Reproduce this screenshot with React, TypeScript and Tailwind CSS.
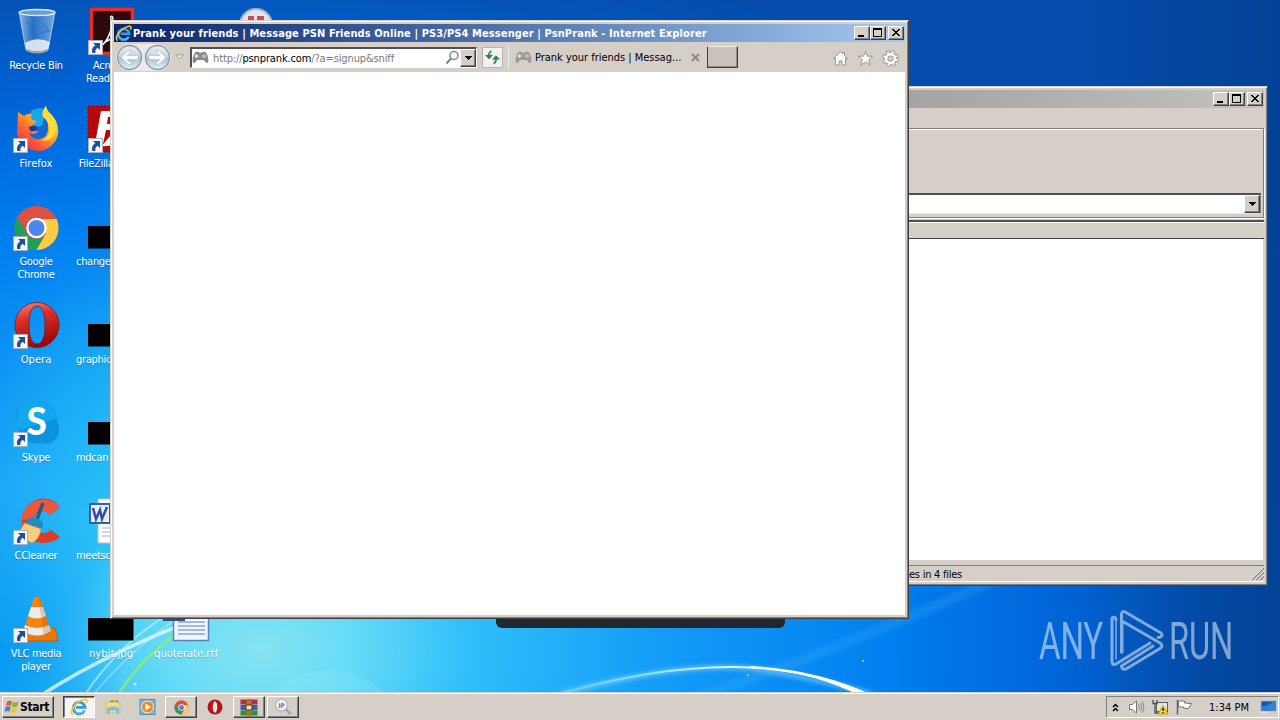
import React from 'react';
import clsx from 'clsx';

const raised =
  'border border-t-white border-l-white border-r-[#404040] border-b-[#404040] shadow-[inset_-1px_-1px_0_#808080]';
const frame =
  'border border-t-[#d4d0c8] border-l-[#d4d0c8] border-r-[#404040] border-b-[#404040] shadow-[inset_1px_1px_0_#fff,inset_-1px_-1px_0_#808080] p-[3px]';

function Wallpaper() {
  return (
    <svg className="absolute inset-0" width="1280" height="720" viewBox="0 0 1280 720">
      <defs>
        <radialGradient
          id="sky"
          gradientUnits="userSpaceOnUse"
          cx="0"
          cy="0"
          r="1000"
          gradientTransform="translate(260 650) scale(1.04 0.74)"
        >
          <stop offset="0" stopColor="#86e4f2" />
          <stop offset="0.09" stopColor="#66dbf6" />
          <stop offset="0.2" stopColor="#30bffa" />
          <stop offset="0.38" stopColor="#149df7" />
          <stop offset="0.6" stopColor="#0080f0" />
          <stop offset="0.76" stopColor="#0066da" />
          <stop offset="0.9" stopColor="#0454b8" />
          <stop offset="1" stopColor="#064cac" />
        </radialGradient>
        <radialGradient id="edge" gradientUnits="userSpaceOnUse" cx="0" cy="0" r="1" gradientTransform="translate(0 660) scale(130 180)">
          <stop offset="0" stopColor="#0092f0" stopOpacity="0.8" />
          <stop offset="1" stopColor="#0092f0" stopOpacity="0" />
        </radialGradient>
        <radialGradient id="glow" gradientUnits="userSpaceOnUse" cx="0" cy="0" r="1" gradientTransform="translate(130 440) scale(150 190)">
          <stop offset="0" stopColor="#28c8f4" stopOpacity="0.6" />
          <stop offset="1" stopColor="#28c8f4" stopOpacity="0" />
        </radialGradient>
        <linearGradient id="dusk" x1="0" x2="1">
          <stop offset="0" stopColor="#003a86" stopOpacity="0" />
          <stop offset="1" stopColor="#003a86" stopOpacity="0.6" />
        </linearGradient>
        <linearGradient id="arc" x1="0" x2="1">
          <stop offset="0" stopColor="#7fdcff" stopOpacity="0.5" />
          <stop offset="0.6" stopColor="#d8f4ff" />
          <stop offset="1" stopColor="#ffffff" />
        </linearGradient>
        <filter id="soft" x="-20%" y="-20%" width="140%" height="140%">
          <feGaussianBlur stdDeviation="2" />
        </filter>
      </defs>
      <rect width="1280" height="720" fill="url(#sky)" />
      <rect width="300" height="700" fill="url(#glow)" />
      <rect width="200" height="700" fill="url(#edge)" />
      <rect x="1080" width="200" height="720" fill="url(#dusk)" />
      <circle cx="328" cy="752" r="82" fill="#b8f4ff" opacity="0.13" />
      <path d="M40 696Q110 650 225 608" fill="none" stroke="#e8fbff" strokeWidth="3.5" opacity="0.75" />
      <path d="M84 696Q120 642 172 612" fill="none" stroke="#d0f6ff" strokeWidth="2" opacity="0.6" />
      <path d="M92 696Q130 650 186 612" fill="none" stroke="#d0f6ff" strokeWidth="1.5" opacity="0.5" />
      <path d="M117 696Q140 660 176 634" fill="none" stroke="#90f060" strokeWidth="2.5" opacity="0.85" />
      <path d="M690 700Q850 646 1040 560" fill="none" stroke="#5fc0ff" strokeWidth="10" opacity="0.18" filter="url(#soft)" />
      <path d="M560 694Q700 656 775 672Q830 682 872 694" fill="none" stroke="#a0e4ff" strokeWidth="5" opacity="0.5" filter="url(#soft)" />
      <path d="M562 693Q660 666 735 667Q790 668 835 682" fill="none" stroke="url(#arc)" strokeWidth="2" />
      <path d="M750 666Q820 670 874 696L860 696Q812 671 750 668Z" fill="#fff" />
      <circle cx="748" cy="675" r="1" fill="#8fdcff" />
      <circle cx="863" cy="661" r="1" fill="#8fdcff" />
      <circle cx="135" cy="684" r="1.5" fill="#b8f4ff" />
    </svg>
  );
}

function ShortcutArrow() {
  return (
    <g transform="translate(1 32)">
      <rect x="0.5" y="0.5" width="14" height="14" fill="#f4f6f8" stroke="#a8b0b8" />
      <path d="M5 3h7v7l-2.300-2.300C7.600 9 7 10.700 7.500 13H4.300C3.300 9.500 4.500 7 7.300 5.300Z" fill="#1c4f9c" />
    </g>
  );
}

function BinIcon() {
  return (
    <>
      <defs>
        <linearGradient id="bin" x1="0" x2="1">
          <stop offset="0" stopColor="#cfe4f6" stopOpacity="0.7" />
          <stop offset="0.4" stopColor="#4c88cc" stopOpacity="0.5" />
          <stop offset="1" stopColor="#c8e0f4" stopOpacity="0.6" />
        </linearGradient>
      </defs>
      <path d="M7 4 14 42Q25 47 36 42L43 4Z" fill="url(#bin)" stroke="#a4c4e4" strokeWidth="1" />
      <ellipse cx="25" cy="4.500" rx="18" ry="3" fill="#6c9cd4" stroke="#d8eaf8" strokeWidth="1.300" />
      <path d="M13 35Q25 28 38 34L36 41Q25 46 14 41Z" fill="#eef2f6" opacity="0.85" />
      <path d="M14 41Q25 46 36 41V43Q25 48 14 43Z" fill="#a8a090" />
      <path d="m14 14 8 6-5 8m14-13 6 8-9 2" fill="none" stroke="#2d6cb8" strokeWidth="2" opacity="0.5" />
    </>
  );
}

function AcrobatIcon() {
  return (
    <>
      <rect x="4.500" y="1.500" width="41" height="44" fill="#2c0a0c" stroke="#ee2a24" strokeWidth="3.500" />
      <path d="M14 38C20 34 27 20 24 11c-2-4 4-4 1 3-1 9 6 18 14 18 4 0 3-3-3-3-9 0-17 3-22 9Z" fill="none" stroke="#fff" strokeWidth="1.500" />
    </>
  );
}

function FirefoxIcon() {
  return (
    <>
      <defs>
        <linearGradient id="fox" x1="0.9" y1="0" x2="0.1" y2="1">
          <stop offset="0" stopColor="#fff44f" />
          <stop offset="0.4" stopColor="#ffb02a" />
          <stop offset="0.7" stopColor="#ff5a30" />
          <stop offset="1" stopColor="#e8226a" />
        </linearGradient>
      </defs>
      <circle cx="27" cy="18" r="16" fill="#1268d8" />
      <path d="M19 5Q27 0 34 4L30 20 18 22Z" fill="#16a8ee" />
      <path d="M6 6 12 10Q16 7 20 8 18 11 20 14L25 15 21 19 18 21Q20 26 27 25 23 30 17 27 20 34 28 33 37 31 36 20 36 11 30 9 31 3 34 0C34 6 40 8 44 15 50 29 43 40 32 44 18 48 8 38 5 28 3 19 7 13Z" fill="url(#fox)" />
      <path d="M34 0Q30 5 31 11 39 17 37 27 34 34 28 34 38 37 43 28 46 18 40 9 35 5 34 0Z" fill="#ffdc38" />
      <path d="M17 21Q23 18 25 21 25 26 18 25Z" fill="#203a90" />
    </>
  );
}

function FileZillaIcon() {
  return (
    <>
      <rect x="1" y="0" width="46" height="46" fill="#b8080c" stroke="#8a0408" strokeDasharray="2 2" />
      <path d="M14 5h24l-1 6H21l-1 7h12l-2 6H19l-3 14H8Z" fill="#fff" />
      <path d="m29 26-10 12 10-1v8h14" fill="none" stroke="#fff" strokeWidth="4" />
    </>
  );
}

function ChromeMark({ cx = 24.5, cy = 24, r = 22 }: { cx?: number; cy?: number; r?: number }) {
  return (
    <g transform={`translate(${cx} ${cy}) scale(${r / 22})`}>
      <circle r="22" fill="#dd5144" />
      <path d="M-19 -11A22 22 0 0 0 0 22L9.500 5.500A11 11 0 0 1 -9.500 5.500Z" fill="#1da05e" />
      <path d="M0 22A22 22 0 0 0 20 -9H0L9.500 5.500Z" fill="#ffcd45" />
      <path d="M-19 -11-9.500 5.500 0 -9H20A22 22 0 0 0 -19 -11Z" fill="#dd5144" />
      <circle r="10.300" fill="#fff" />
      <circle r="8" fill="#4c87f0" />
    </g>
  );
}

function OperaIcon() {
  return (
    <>
      <defs>
        <linearGradient id="opera" x1="0" y1="0" x2="0.3" y2="1">
          <stop offset="0" stopColor="#f49080" />
          <stop offset="0.4" stopColor="#dc3028" />
          <stop offset="1" stopColor="#9c0808" />
        </linearGradient>
      </defs>
      <path
        fillRule="evenodd"
        d="M25 0.500a22 22.500 0 1 0 .1 0ZM25 4C31 4 33 13 33 23S31 42 25 42 17 33 17 23 19 4 25 4Z"
        fill="url(#opera)"
        stroke="#8c1410"
        strokeWidth="0.800"
      />
    </>
  );
}

function SkypeIcon() {
  return (
    <>
      <path d="M14 2C20-2 24 2 29 2 39 4 45 11 45 21 48 27 48 34 44 39 39 45 32 44 28 43 15 45 5 36 6 24 2 16 5 5 14 2Z" fill="#0d92e0" />
      <path d="M14 2C20-2 24 2 29 2 39 4 45 11 45 18L8 30C3 20 4 6 14 2Z" fill="#10a8ee" />
      <text x="24.500" y="35" textAnchor="middle" fill="#fff" fontSize="37" fontWeight="900" fontFamily="Lato, sans-serif">S</text>
    </>
  );
}

function CCleanerIcon() {
  return (
    <>
      <path d="M48 9 38 17C32 9 21 14 21 24s10 15 18 8l9 7C38 48 22 46 14 38 6 26 10 10 20 4 30-2 42 0 48 9Z" fill="#dc3c28" />
      <path d="M48 9 38 17C32 9 21 14 21 20L10 22C9 12 18 3 28 2S44 4 48 9Z" fill="#ea5840" />
      <path d="m31 5-7 19" stroke="#1c5c90" strokeWidth="3.500" />
      <path d="M17 20Q24 18 31 25L30 31 13 26Z" fill="#2888b8" />
      <path d="m12 25 17 6c-1 7-5 12-9 14L2 36C7 34 10 31 12 25Z" fill="#f6cc80" stroke="#d89848" strokeWidth="0.700" />
    </>
  );
}

function VlcIcon() {
  return (
    <>
      <path d="M12 32h31l3 13H8Z" fill="#e87808" stroke="#c05c04" />
      <path d="M22 2Q25 -1 28 2L39 36Q25 45 11 36Z" fill="#f48410" />
      <path d="m19 11 12 0 3 9Q25 25 16 20Z" fill="#ececec" />
      <path d="M13 29Q25 35 37 29L39 35Q25 44 11 35Z" fill="#ececec" />
      <path d="M26 0 28 2 39 36Q36 39 32 40Z" fill="#b84c00" opacity="0.25" />
    </>
  );
}

function PictureFile() {
  return <rect x="1" y="22" width="45.500" height="22.500" fill="#000" />;
}

function WordFile() {
  return (
    <>
      <path d="M11 1h30v44H11Z" fill="#f8fafe" stroke="#b8c4d8" />
      <path d="M15 30h22M15 34h22M15 38h22" stroke="#a8b4cc" />
      <rect x="3" y="6" width="20" height="19" fill="#e8eefa" stroke="#3c5ca0" strokeWidth="2" />
      <path d="m6 10 3 11 4-9 2 9 5-12" fill="none" stroke="#2c50a8" strokeWidth="2.500" />
    </>
  );
}

function RtfFile() {
  return (
    <>
      <path d="M11.500 1h35v43.500h-35Z" fill="#f0f6fe" stroke="#6080b8" strokeWidth="1.500" />
      <path d="M16 26h27M16 30h27M16 34h27M16 38h27" stroke="#5878c0" />
      <rect x="2" y="4" width="20" height="20" fill="#e8eefa" stroke="#2c4c98" strokeWidth="2" />
    </>
  );
}

function SearchDisc() {
  return (
    <>
      <circle cx="19" cy="17" r="16" fill="#dce4ee" stroke="#a8b4c8" strokeWidth="2" />
      <path d="M11 10h6m3 0h7" stroke="#d84848" strokeWidth="4" />
    </>
  );
}

interface DesktopItem {
  label: string;
  icon: React.ReactNode;
  shortcut?: boolean;
  start?: boolean;
  wide?: boolean;
}

const desktopItems: (DesktopItem | null)[] = [
  { label: 'Recycle Bin', icon: <BinIcon /> },
  { label: 'Firefox', icon: <FirefoxIcon />, shortcut: true, wide: true },
  { label: 'Google Chrome', icon: <ChromeMark />, shortcut: true },
  { label: 'Opera', icon: <OperaIcon />, shortcut: true, wide: true },
  { label: 'Skype', icon: <SkypeIcon />, shortcut: true },
  { label: 'CCleaner', icon: <CCleanerIcon />, shortcut: true },
  { label: 'VLC media player', icon: <VlcIcon />, shortcut: true },
  { label: 'Acrobat Reader DC', icon: <AcrobatIcon />, shortcut: true },
  { label: 'FileZilla Client', icon: <FileZillaIcon />, shortcut: true },
  { label: 'change', icon: <PictureFile />, start: true },
  { label: 'graphic', icon: <PictureFile />, start: true },
  { label: 'mdcan', icon: <PictureFile />, start: true },
  { label: 'meetsc', icon: <WordFile />, start: true },
  { label: 'nybit.jpg', icon: <PictureFile />, wide: true },
  null,
  null,
  null,
  null,
  null,
  null,
  { label: 'quoterate.rtf', icon: <RtfFile />, wide: true },
  { label: '', icon: <SearchDisc /> },
];

function DesktopIcons() {
  return (
    <div className="relative grid w-max grid-flow-col auto-cols-[72px] grid-rows-[repeat(7,98px)] gap-x-[3px] pt-2">
      {desktopItems.map((item, i) =>
        item ? (
          <div key={i} className="flex flex-col items-center gap-[3px]">
            <svg width="48" height="48" viewBox="0 0 48 48" className="overflow-visible">
              {item.icon}
              {item.shortcut && <ShortcutArrow />}
            </svg>
            <span
              className={clsx(
                'w-[72px] text-white [text-shadow:0_1px_1px_rgba(0,30,80,0.25)]',
                item.start ? 'pl-[1px] text-left' : 'text-center',
                item.wide && 'tracking-[0.05px]',
              )}
            >
              {item.label}
            </span>
          </div>
        ) : (
          <div key={i} />
        ),
      )}
    </div>
  );
}

function IeMark({ size }: { size: number }) {
  return (
    <svg width={size} height={size} viewBox="0 0 18 18">
      <path d="M14.500 12.500A5.800 5.800 0 1 1 15 9.300H6" fill="none" stroke="#2f9be0" strokeWidth="2.800" />
      <path d="M14.500 12.500A5.800 5.800 0 0 1 4 11" fill="none" stroke="#7cd0f8" strokeWidth="1" />
      <path d="M3 16.500C-2 15 6 3 14 1.500c3-.5 3.500 1 2.300 3.500" fill="none" stroke="#f2c62c" strokeWidth="1.700" />
    </svg>
  );
}

function Gamepad() {
  return (
    <svg width="17" height="13" viewBox="0 0 17 13" className="shrink-0">
      <path d="M4 .8h2.500l1 1h2l1-1H13C15.500 2 16.800 8 16.200 11c-1 2-2.700 1-4.200-2H5C3.500 12 1.800 13 .8 11 .2 8 1.500 2 4 .8Z" fill="#8a8a8a" />
      <path d="M4.500 3v4M2.500 5h4" stroke="#e8e8e8" strokeWidth="1.300" />
      <path d="M12 3v4M10 5h4" stroke="#ddd" strokeWidth="1.300" strokeDasharray="1.300 1.400" />
    </svg>
  );
}

function CaptionButton({ kind }: { kind: 'min' | 'max' | 'close' }) {
  return (
    <span className={clsx('flex h-[14px] w-4 items-center justify-center bg-[#d4d0c8]', raised, kind === 'close' && 'ml-[2px]')}>
      <svg width="14" height="12" viewBox="0 0 14 12" shapeRendering="crispEdges">
        {kind === 'min' && <path d="M3 8h6v2H3Z" />}
        {kind === 'max' && <path fillRule="evenodd" d="M2 1h9v9H2ZM3 3h7v6H3Z" />}
        {kind === 'close' && <path d="M3 2h2v1h1v1h2V3h1V2h2v1h-1v1H9v1H8v1h1v1h1v1h1v1H9V8H8V7H6v1H5v1H3V8h1V7h1V6h1V5H5V4H4V3H3Z" />}
      </svg>
    </span>
  );
}

function CaptionButtons() {
  return (
    <div className="flex">
      <CaptionButton kind="min" />
      <CaptionButton kind="max" />
      <CaptionButton kind="close" />
    </div>
  );
}

function DropButton() {
  return (
    <span className={clsx('flex w-4 shrink-0 items-center justify-center bg-[#d4d0c8]', raised)}>
      <svg width="7" height="4" viewBox="0 0 7 4" shapeRendering="crispEdges">
        <path d="M0 0h7v1H6v1H5v1H4v1H3V3H2V2H1V1H0Z" />
      </svg>
    </span>
  );
}

function FilesWindow() {
  return (
    <div className={clsx('absolute top-[86px] left-[800px] flex h-[500px] w-[468px] flex-col bg-[#d6cfc8]', frame)}>
      <div className="flex h-[18px] items-center justify-end bg-linear-to-r from-[#9c9c9c] to-[#c2c1be] pr-[1px]">
        <CaptionButtons />
      </div>
      <div className="h-5" />
      <div className="flex h-[90px] flex-col justify-end border border-[#808080] pr-[2px] pb-[3px] shadow-[inset_0_1px_0_#fff,1px_1px_0_#fff]">
        <div className="flex h-[21px] border-t-2 border-r border-b border-t-[#505050] border-r-[#808080] border-b-[#e8e6e0] bg-white">
          <span className="flex-1" />
          <DropButton />
        </div>
      </div>
      <div className="mt-[2px] h-[2px] bg-[#505050]" />
      <div className="h-[17px] border-t border-b border-t-white border-b-[#404040] bg-[#d4d0c8]" />
      <div className="flex-1 border-r border-b border-[#d4d0c8] bg-white" />
      <div className="mt-1 flex h-[17px] items-center justify-between border-t border-b border-t-[#808080] border-b-white">
        <span className="pl-[105px] pt-[1px] tracking-[-0.25px] text-black">es in 4 files</span>
        <svg width="13" height="13" viewBox="0 0 13 13">
          <path d="M1 13 13 1M5 13l8-8M9 13l4-4" stroke="#808080" strokeWidth="1.500" />
          <path d="M0 13 13 0M4 13l9-9M8 13l5-5" stroke="#fff" strokeWidth="0.700" />
        </svg>
      </div>
    </div>
  );
}

function NavButton({ back }: { back?: boolean }) {
  return (
    <svg width="27" height="27" viewBox="0 0 27 27">
      <defs>
        <linearGradient id={back ? 'navBack' : 'navNext'} x1="0" y1="0" x2="0" y2="1">
          <stop offset="0" stopColor="#e8eef4" />
          <stop offset="0.48" stopColor="#c8d4e0" />
          <stop offset="0.52" stopColor="#acc0d0" />
          <stop offset="1" stopColor="#dcf6fc" />
        </linearGradient>
      </defs>
      <circle cx="13.500" cy="13.500" r="12" fill={back ? 'url(#navBack)' : 'url(#navNext)'} stroke="#8c9aa6" strokeWidth="1.300" />
      <path
        transform={back ? undefined : 'matrix(-1 0 0 1 27 0)'}
        d="M5 13.500 12.500 6.500h3.500l-5 5h11v4H11l5 5h-3.500Z"
        fill="#fff"
        stroke="#9cb0c0"
        strokeWidth="0.500"
      />
    </svg>
  );
}

function BrowserWindow() {
  return (
    <div className={clsx('absolute top-5 left-[110px] flex h-[599px] w-[799px] flex-col bg-[#d6cfc8]', frame)}>
      <div className="flex h-[18px] shrink-0 items-center bg-linear-to-r from-[#0a246a] to-[#a6caf0] pr-[1px] pl-[1px]">
        <IeMark size={17} />
        <span className="flex-1 pl-[1px] font-bold tracking-[0.1px] whitespace-nowrap text-white">
          Prank your friends | Message PSN Friends Online | PS3/PS4 Messenger | PsnPrank - Internet Explorer
        </span>
        <CaptionButtons />
      </div>
      <div className="flex h-[30px] shrink-0 items-center pl-[2px]">
        <div className="flex rounded-full bg-[#eceae6]">
          <NavButton back />
          <span className="ml-[1px] flex">
            <NavButton />
          </span>
        </div>
        <svg className="ml-1" width="9" height="6" viewBox="0 0 9 6">
          <path d="M.8.800h7.400L4.500 5Z" fill="#f4f2ee" stroke="#a09c94" />
        </svg>
        <div className="ml-[6px] flex h-[21px] w-[287px] items-center border-t-2 border-l-2 border-r border-b border-t-[#505050] border-l-[#505050] border-r-white border-b-white bg-white">
          <Gamepad />
          <span className="flex-1 pt-[1px] pl-1 tracking-[-0.13px] text-[#787878]">
            http://<span className="text-black">psnprank.com</span>/?a=signup&amp;sniff
          </span>
          <svg width="15" height="15" viewBox="0 0 15 15">
            <circle cx="9" cy="5.500" r="4" fill="#fff" stroke="#848484" strokeWidth="1.500" />
            <path d="m6 8.500-4.500 5" stroke="#848484" strokeWidth="2" />
          </svg>
          <span className="flex h-[18px]">
            <DropButton />
          </span>
        </div>
        <div className="ml-[5px] flex h-[21px] w-[21px] items-center justify-center border border-[#b8b4ac] bg-[#f2f0f4]">
          <svg width="15" height="15" viewBox="0 0 15 15">
            <path d="M6.500 1.500Q4 1.500 4 6M8.500 13.500Q11 13 11 8" fill="none" stroke="#3c9440" strokeWidth="2" />
            <path d="M0 5h8L4 9.300ZM7 9.500h8L11 5.200Z" fill="#2f8434" />
          </svg>
        </div>
        <div className="ml-[5px] flex h-6 w-[199px] items-center border-l border-[#eeece8] pl-[6px]">
          <span className="opacity-75">
            <Gamepad />
          </span>
          <span className="flex-1 pt-[1px] pl-[3px] tracking-[-0.02px] whitespace-nowrap text-black">Prank your friends | Messag...</span>
          <svg className="mr-[7px]" width="9" height="9" viewBox="0 0 9 9">
            <path d="m1 1 7 7M8 1 1 8" stroke="#8c8884" strokeWidth="2" />
          </svg>
        </div>
        <span className="h-[22px] w-[31px] border border-t-[#f0eeea] border-r-[#404040] border-b-[#404040] border-l-[#404040] bg-[#c9c1bb] shadow-[inset_-1px_-1px_0_#908c88]" />
        <div className="ml-auto flex items-center gap-2 pt-[2px] pr-[6px]">
          <svg width="17" height="17" viewBox="0 0 17 17">
            <path d="M8.500 1.500 1.500 8.500h2V15h3.500v-4h3v4h3.500V8.500h2l-3-3V2.500h-2v1Z" fill="#fff" stroke="#98948e" />
          </svg>
          <svg width="17" height="17" viewBox="0 0 17 17">
            <path d="m8.500 1.200 2 5h5.300l-4.200 3.600 1.600 5.500-4.700-3.200-4.700 3.200 1.600-5.500L1.200 6.200h5.300Z" fill="#fff" stroke="#98948e" />
          </svg>
          <svg width="17" height="17" viewBox="0 0 17 17">
            <circle cx="8.500" cy="8.500" r="6.500" fill="none" stroke="#98948e" strokeWidth="3.600" strokeDasharray="3 2.100" />
            <circle cx="8.500" cy="8.500" r="4.500" fill="none" stroke="#98948e" strokeWidth="4.400" />
            <circle cx="8.500" cy="8.500" r="6.400" fill="none" stroke="#fff" strokeWidth="2" strokeDasharray="2 3.030" strokeDashoffset="-0.500" />
            <circle cx="8.500" cy="8.500" r="4.400" fill="none" stroke="#fff" strokeWidth="2.600" />
          </svg>
        </div>
      </div>
      <div className="flex-1 bg-white" />
    </div>
  );
}

function AnyRunLogo() {
  return (
    <svg className="absolute top-[600px] left-[1030px] overflow-visible" width="220" height="80" viewBox="1030 600 220 80">
      <g opacity="0.5" fill="#fff" fontFamily="Roboto, sans-serif" fontSize="51" fontWeight="400">
        <text x="1039" y="659" textLength="64" lengthAdjust="spacingAndGlyphs">ANY</text>
        <text x="1169" y="659" textLength="64" lengthAdjust="spacingAndGlyphs">RUN</text>
      </g>
      <g opacity="0.5" fill="none" stroke="#fff" strokeWidth="3" strokeLinecap="round" strokeLinejoin="round">
        <path d="M1116 620Q1116 616 1112 618V661Q1112 666 1116 664L1150 643" />
        <path d="M1116 622V659" strokeWidth="1.500" />
        <path d="M1121.500 652V614Q1122 610 1126 612.500L1161 633Q1164 637 1158 637.500" />
        <path d="M1122 652V621L1160 643Q1164 646 1160 648.500L1126 669Q1122 670 1121.500 666L1153 646" />
      </g>
    </svg>
  );
}

function TaskButton({ state, children }: { state?: 'raised' | 'pressed'; children: React.ReactNode }) {
  return (
    <span
      className={clsx(
        'flex h-[22px] w-8 items-center justify-center',
        state === 'raised' && raised,
        state === 'pressed' &&
          'border border-t-[#404040] border-l-[#404040] border-r-white border-b-white bg-[#f6f4f2] shadow-[inset_1px_1px_0_#808080]',
      )}
    >
      {children}
    </span>
  );
}

function Taskbar() {
  return (
    <div className="absolute inset-x-0 bottom-0 flex h-7 items-center border-t border-[#d4d0c8] bg-[#d6cfc8] pt-[1px] pl-[2px] shadow-[inset_0_1px_0_#fff]">
      <div className={clsx('flex h-[22px] w-[52px] shrink-0 items-center pl-[1px] font-bold', raised)}>
        <svg width="16" height="16" viewBox="0 0 17 16" className="shrink-0">
          <path d="M3.500 2Q6 .5 8.500 2L7.300 7Q5 5.500 2 7Z" fill="#e8582c" />
          <path d="M9.500 2.500Q12 4 15.500 2.500L14 7.500Q11 9 8.300 7.500Z" fill="#7cb83c" />
          <path d="M1.800 8Q4.500 6.500 7 8L5.800 13Q3.500 11.500.500 13Z" fill="#3c84d8" />
          <path d="M8 8.500Q10.500 10 13.800 8.500L12.500 13.500Q9.500 15 6.800 13.500Z" fill="#f4c02c" />
        </svg>
        <span className="text-xs leading-[14px] tracking-[-0.3px] text-black">Start</span>
      </div>
      <div className="ml-[9px] flex gap-[2px]">
        <TaskButton state="pressed">
          <IeMark size={18} />
        </TaskButton>
        <TaskButton>
          <svg width="16" height="16" viewBox="0 0 16 16">
            <path d="M1 3h5l1-1.500h6V4h2v10H1Z" fill="#f2dc8c" stroke="#d8b860" strokeWidth="0.800" />
            <path d="M5 2.500h4M10 2.500h3" stroke="#58b040" strokeWidth="1.500" />
            <path d="M2 9q6-3 12 0v6h-3v-3.500H5V15H2Z" fill="#7cc0e4" />
          </svg>
        </TaskButton>
        <TaskButton>
          <svg width="17" height="16" viewBox="0 0 17 16">
            <rect x="1" y="0.500" width="15" height="15" fill="#74b4e4" stroke="#4890cc" />
            <circle cx="8.500" cy="8" r="6" fill="#f48418" stroke="#fff0d8" />
            <path d="m6.500 4.500 5.500 3.500-5.500 3.500Z" fill="#fff" />
          </svg>
        </TaskButton>
        <TaskButton state="raised">
          <svg width="15" height="15" viewBox="0 0 15 15">
            <ChromeMark cx={7.5} cy={7.5} r={7} />
          </svg>
        </TaskButton>
        <TaskButton>
          <svg width="16" height="16" viewBox="0 0 16 16">
            <circle cx="8" cy="8" r="7.500" fill="#b81418" />
            <ellipse cx="8" cy="8" rx="2.300" ry="5.800" fill="#f4e4e0" />
          </svg>
        </TaskButton>
        <TaskButton state="raised">
          <svg width="18" height="17" viewBox="0 0 18 17">
            <rect x="0.500" y="0.500" width="17" height="5" fill="#b82848" />
            <rect x="0.500" y="6" width="17" height="5" fill="#3060c0" />
            <rect x="0.500" y="11.500" width="17" height="5" fill="#28903c" />
            <rect x="6.500" y="0" width="5" height="17" fill="#a87828" />
            <rect x="6" y="6" width="6" height="5" fill="#f0e0b0" stroke="#503818" />
          </svg>
        </TaskButton>
        <TaskButton state="raised">
          <svg width="18" height="18" viewBox="0 0 18 18">
            <circle cx="7.500" cy="7" r="6" fill="#f0f4fa" stroke="#b0b8c4" strokeWidth="1.300" />
            <path d="m12 11.500 4.500 4.500" stroke="#a0a4ac" strokeWidth="2.500" />
            <text x="7.500" y="9.500" textAnchor="middle" fontSize="6.500" fontWeight="700" fill="#cc4468">IP</text>
          </svg>
        </TaskButton>
      </div>
      <div className="mr-px ml-auto flex h-[22px] w-[173px] items-center border border-t-[#808080] border-r-white border-b-white border-l-[#808080]">
        <svg className="ml-[5px]" width="7" height="9" viewBox="0 0 7 9">
          <path d="m1 4 2.500-2.500L6 4M1 8l2.500-2.500L6 8" fill="none" stroke="#000" strokeWidth="1.500" />
        </svg>
        <svg className="ml-[9px]" width="18" height="16" viewBox="0 0 18 16">
          <path d="M1.500 5.500h3L8.500 2v12l-4-3.500h-3Z" fill="#fff" stroke="#777" />
          <path d="M10.500 5.500q1.500 2.500 0 5M12.500 4q2.500 4 0 8M14.500 2.500q3 5.500 0 11" fill="none" stroke="#888" />
        </svg>
        <svg className="ml-[6px]" width="17" height="16" viewBox="0 0 17 16">
          <rect x="4.500" y="3.500" width="11" height="9" fill="#e4e4e0" stroke="#606060" />
          <path d="M1 1v3.500h4V1M3 4.500V14h4" fill="none" stroke="#505050" strokeWidth="1.300" />
          <path d="m11 6.500 5 8.500H6Z" fill="#fcd820" stroke="#c89800" />
          <path d="M11 9v3m0 1v1" stroke="#000" strokeWidth="1.300" />
        </svg>
        <svg className="ml-[7px]" width="17" height="16" viewBox="0 0 17 16">
          <path d="M1.500 1v14.500" stroke="#606060" strokeWidth="1.500" />
          <path d="M2.500 2h6v2l7 .5-3 5-5-.5V8h-5Z" fill="#fff" stroke="#707070" />
        </svg>
        <span className="ml-[16px] tracking-[0.03px] whitespace-nowrap text-black">1:34 PM</span>
        <svg className="mr-[1px] ml-auto" width="17" height="14" viewBox="0 0 17 14">
          <rect x="1" y="1" width="15" height="10" fill="#1858b0" stroke="#98b4d8" strokeWidth="0.800" />
          <path d="M1.500 10.500V6Q8 7 13 1.500h2.500v9Z" fill="#3880d0" />
          <path d="M1 12.500h6" stroke="#d8e4f0" strokeWidth="1.500" />
        </svg>
      </div>
    </div>
  );
}

export default function App() {
  return (
    <div className="relative h-[720px] w-[1280px] overflow-hidden bg-[#0a4fae] font-['DejaVu_Sans_Condensed','DejaVu_Sans',sans-serif] text-[11px] leading-[13px] tracking-[-0.3px]">
      <Wallpaper />
      <DesktopIcons />
      <AnyRunLogo />
      <div className="absolute top-[600px] left-[496px] h-7 w-[289px] rounded-b-md bg-[#20272e]" />
      <FilesWindow />
      <BrowserWindow />
      <Taskbar />
    </div>
  );
}
